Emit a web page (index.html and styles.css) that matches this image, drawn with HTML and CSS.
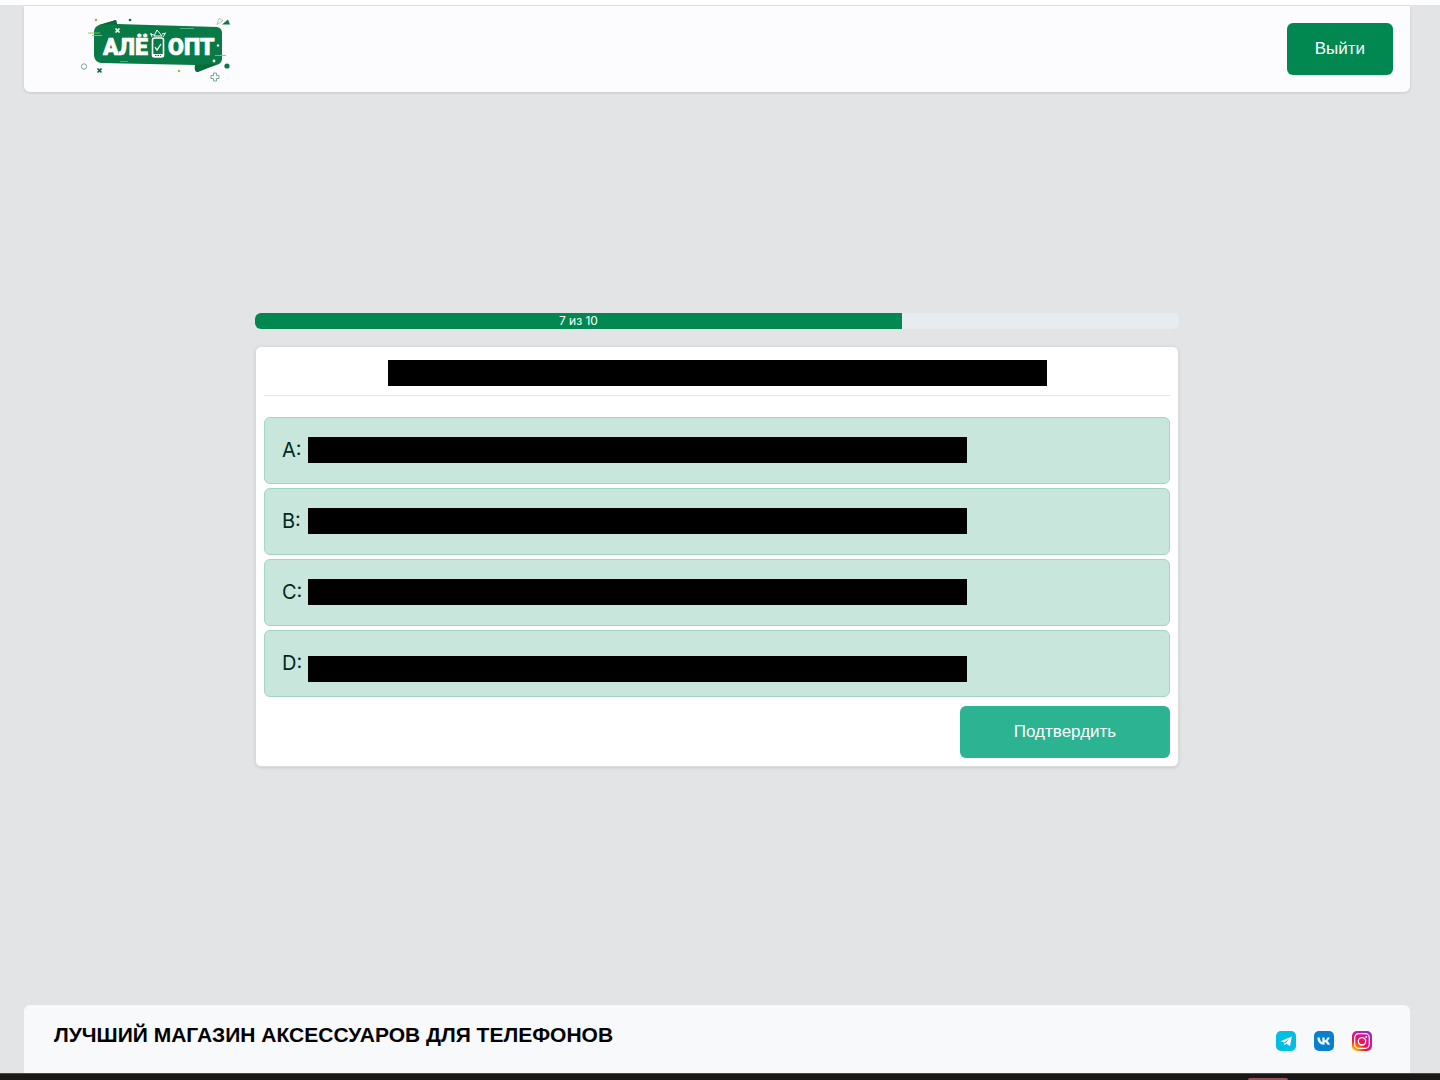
FILE: index.html
```html
<!DOCTYPE html>
<html lang="ru">
<head>
<meta charset="utf-8">
<meta name="viewport" content="width=device-width, initial-scale=1">
<title>АЛЁ ОПТ</title>
<link rel="stylesheet" href="styles.css">
</head>
<body>
<div class="page">
  <div class="top-strip"></div>
  <header class="header">
    <a class="logo" href="#" aria-label="АЛЁ ОПТ">
      <svg width="176" height="76" viewBox="69 11 176 76">
        <path d="M94 32Q94 27 99 25L116 20L117 24L217 27Q222 28 222 33V59Q222 62 219 64L197 72Q194 72 195 65L101 63Q95 62 94 56Z" fill="#087a45"/>
        <path d="M99 25L116 20L117 24Z" fill="#076a3a"/>
        <path d="M195 65L217 64L198 72Q194 72 195 65Z" fill="#076a3a"/>
        <path d="M180 28.500h14M120 61.500h8" stroke="#4fb27f" stroke-width="1"/>
        <text class="logo-text" x="103" y="55">АЛЁ</text>
        <text class="logo-text" x="168" y="55">ОПТ</text>
        <rect x="152.500" y="38" width="11" height="19" rx="2" fill="#087a45" stroke="#fff" stroke-width="1.600"/>
        <path d="M155 47l2 3 4-6" fill="none" stroke="#fff" stroke-width="1.300"/>
        <path d="M152 54h12v3h-12z" fill="#fff"/>
        <path d="M155 55.500h6" stroke="#087a45" stroke-width="1" stroke-dasharray="1.500 1"/>
        <path d="M154 36l3-6 5 6zM150 34l4 1M152 37l-1-4M162 34l4-1M163 37l2-3" fill="none" stroke="#fff" stroke-width="1"/>
        <path d="M115.500 28.500l4 4m0-4l-4 4" stroke="#fff" stroke-width="1.700"/>
        <path d="M97.500 68.500l4 4m0-4l-4 4" stroke="#14643d" stroke-width="1.700"/>
        <circle cx="96" cy="20" r="1.200" fill="#8cbc35"/>
        <circle cx="130" cy="20" r="1.300" fill="#14643d"/>
        <circle cx="179" cy="71" r="1.200" fill="#a9b72a"/>
        <circle cx="218" cy="45.500" r="1.200" fill="#fff"/>
        <circle cx="214" cy="61" r="1.400" fill="#fff"/>
        <circle cx="227" cy="66" r="2.600" fill="#087a45"/>
        <circle cx="84" cy="66.500" r="2.700" fill="none" stroke="#7aa98f" stroke-width="1"/>
        <path d="M222 24.500l6-5 2 5z" fill="#087a45"/>
        <path d="M217 24.500l2-6 4 2z" fill="none" stroke="#9bb8a8" stroke-width=".8"/>
        <path d="M88 33h12M92 35.500h10M215 55.500h11" stroke="#8cc63f" stroke-width=".9"/>
        <path d="M213.500 73h3v2.500h2.500v3h-2.500v2.500h-3v-2.500h-2.500v-3h2.500z" fill="none" stroke="#7aa98f" stroke-width="1"/>
      </svg>
    </a>
    <button class="button button-exit" type="button">Выйти</button>
  </header>

  <main class="main">
    <div class="quiz">
      <div class="progress" role="progressbar" aria-valuenow="7" aria-valuemin="0" aria-valuemax="10" aria-label="Вопросы">
        <div class="progress-fill" style="width: 70%">7 из 10</div>
      </div>
      <section class="card">
        <div class="question"><span class="redacted"></span></div>
        <div class="options">
          <button class="option" type="button"><span class="option-label">A:</span><span class="redacted"></span></button>
          <button class="option" type="button"><span class="option-label">B:</span><span class="redacted"></span></button>
          <button class="option" type="button"><span class="option-label">C:</span><span class="redacted"></span></button>
          <button class="option" type="button"><span class="option-label">D:</span><span class="redacted redacted-low"></span></button>
        </div>
        <button class="button button-confirm" type="submit">Подтвердить</button>
      </section>
    </div>
  </main>

  <footer class="footer">
    <h2 class="slogan">ЛУЧШИЙ МАГАЗИН АКСЕССУАРОВ ДЛЯ ТЕЛЕФОНОВ</h2>
    <nav class="socials" aria-label="Соцсети">
      <a href="#" aria-label="Telegram">
        <svg width="20" height="20" viewBox="0 0 20 20"><rect width="20" height="20" rx="5" fill="#00bfe3"/><path d="M4.500 10.200L15.800 5.500 14 15.200 10.200 12.500 8.600 14.400 8.200 11.500z" fill="#fff"/><path d="M8.200 11.500L13.600 7.500 9.400 12.200" fill="#00bfe3"/></svg>
      </a>
      <a href="#" aria-label="VK">
        <svg width="20" height="20" viewBox="0 0 20 20"><rect width="20" height="20" rx="5" fill="#0780ce"/><path d="M3.400 6.500h2.300c.2 2.600 1.400 4.300 2.700 4.700V6.500h2.200v2.900c1.300-.2 2.300-1.400 2.800-2.900h2.200c-.4 1.600-1.400 2.900-2.500 3.500 1.300.6 2.300 1.900 2.900 3.700h-2.500c-.5-1.400-1.500-2.500-2.900-2.700v2.700h-.6c-4 0-6.500-2.700-6.600-7.200z" fill="#fff"/></svg>
      </a>
      <a href="#" aria-label="Instagram">
        <svg width="20" height="20" viewBox="0 0 20 20">
          <defs><radialGradient id="ig" cx=".1" cy="1.050" r="1.250"><stop offset="0" stop-color="#ffd900"/><stop offset=".22" stop-color="#ff8a00"/><stop offset=".45" stop-color="#f8123f"/><stop offset=".7" stop-color="#e0128b"/><stop offset="1" stop-color="#8a2fd0"/></radialGradient></defs>
          <rect width="20" height="20" rx="5" fill="url(#ig)"/>
          <rect x="2.700" y="2.700" width="14.600" height="14.600" rx="4" fill="none" stroke="#fff" stroke-width="1.200"/>
          <circle cx="10" cy="10.300" r="3.700" fill="none" stroke="#fff" stroke-width="1.300"/><circle cx="14.200" cy="5.900" r=".9" fill="#fff"/>
        </svg>
      </a>
    </nav>
  </footer>
  <div class="taskbar"><div class="taskbar-item"></div></div>
</div>
</body>
</html>
```
FILE: styles.css
```css
* {
  box-sizing: border-box;
}

body {
  margin: 0;
  background: #e2e4e6;
  color: #000;
  font-family: "Liberation Sans", Arial, sans-serif;
}

.page {
  display: flex;
  flex-direction: column;
  min-height: 100vh;
}

.top-strip {
  height: 6px;
  background: #fff;
  border-bottom: 1px solid #e2e3e5;
}

.header {
  display: flex;
  align-items: center;
  justify-content: space-between;
  margin: 0 30px 0 24px;
  padding: 5px 17px 5px 45px;
  background: #fcfcfe;
  border-radius: 0 0 6px 6px;
  box-shadow: 0 1px 3px rgba(0, 0, 0, 0.12);
}

.logo {
  display: flex;
}

.logo-text {
  fill: #fff;
  stroke: #fff;
  stroke-width: 0.7px;
  font: 900 23px Roboto, sans-serif;
}

.button {
  height: 52px;
  border: 0;
  border-radius: 6px;
  color: #fff;
  font: 17px "Liberation Sans", Arial, sans-serif;
  cursor: pointer;
}

.button-exit {
  padding: 0 28px;
  background: #008850;
}

.button-confirm {
  align-self: flex-end;
  width: 210px;
  margin-top: 9px;
  background: #2bb392;
}

.main {
  display: flex;
  flex: 1;
  align-items: center;
  justify-content: center;
  margin: 0 30px 0 24px;
  padding: 16px 0 34px;
}

.quiz {
  display: flex;
  flex-direction: column;
  gap: 17px;
  width: 66.6667%;
}

.progress {
  height: 16px;
  overflow: hidden;
  background: #e7ecf0;
  border-radius: 6px;
}

.progress-fill {
  height: 100%;
  background: #008850;
  color: #fff;
  font: 12px/16px Inter, sans-serif;
  text-align: center;
}

.card {
  display: flex;
  flex-direction: column;
  padding: 8px;
  background: #fff;
  border: 1px solid #d9dbdd;
  border-radius: 6px;
  box-shadow: 0 1px 3px rgba(0, 0, 0, 0.12);
}

.question {
  display: flex;
  justify-content: center;
  padding: 5px 0 9px;
  border-bottom: 1px solid #e4e6e8;
}

.redacted {
  flex: 0 1 659px;
  height: 26px;
  background: #000;
}

.redacted-low {
  margin-top: 12px;
}

.options {
  display: flex;
  flex-direction: column;
  gap: 4px;
  margin-top: 21px;
}

.option {
  display: flex;
  align-items: center;
  height: 67px;
  padding: 0 17px;
  background: #c9e6dd;
  border: 1px solid #a3d4c4;
  border-radius: 6px;
  color: #00291a;
  font: 20px/26px Inter, sans-serif;
  text-align: left;
  cursor: pointer;
}

.option-label {
  flex: none;
  width: 26px;
}

.footer {
  display: flex;
  align-items: flex-end;
  justify-content: space-between;
  margin: 0 30px 0 24px;
  padding: 16px 38px 22px 30px;
  background: #f8f9fb;
  border-radius: 6px 6px 0 0;
}

.slogan {
  margin: 0 0 2px;
  font-size: 21px;
  line-height: 28px;
}

.socials {
  display: flex;
  gap: 18px;
}

.socials a {
  display: flex;
}

.taskbar {
  display: flex;
  align-items: flex-end;
  justify-content: flex-end;
  height: 7px;
  padding-right: 152px;
  background: #191817;
  border-top: 1px solid #4a4a4a;
}

.taskbar-item {
  width: 40px;
  height: 2px;
  background: #96505a;
  border-radius: 2px 2px 0 0;
}
```
